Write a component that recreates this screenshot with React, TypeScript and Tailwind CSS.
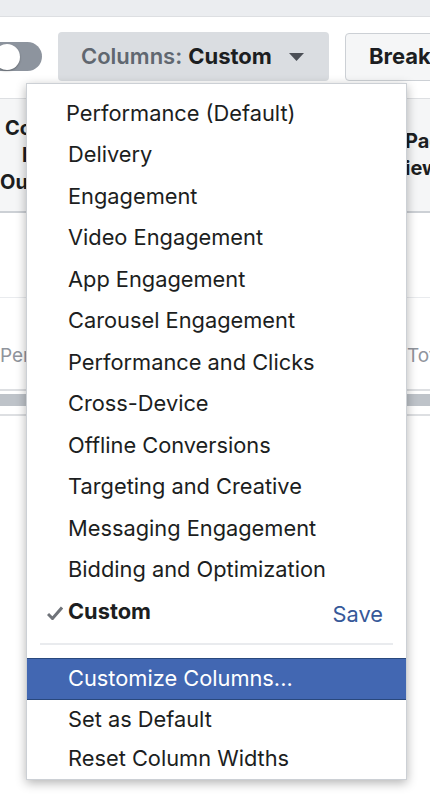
import React from "react";

const items = [
  "Performance (Default)",
  "Delivery",
  "Engagement",
  "Video Engagement",
  "App Engagement",
  "Carousel Engagement",
  "Performance and Clicks",
  "Cross-Device",
  "Offline Conversions",
  "Targeting and Creative",
  "Messaging Engagement",
  "Bidding and Optimization",
];

export default function App() {
  return (
    <div
      className="relative w-[430px] h-[810px] overflow-hidden bg-white text-[#1c1e21]"
      style={{ fontFamily: "Inter, 'Noto Sans', sans-serif" }}
    >
      {/* top band */}
      <div className="h-[17px] bg-[#ebedf0] border-b border-[#dddfe2]" />

      {/* toolbar */}
      <div className="flex items-center pt-[15px] h-[64px]">
        <div className="shrink-0 -ml-[14px] w-[56px] h-[29px] rounded-full bg-[#8d949e] flex items-center px-[2px]">
          <div className="w-[26px] h-[26px] rounded-full bg-white shadow-[0_1px_2px_rgba(0,0,0,0.3)] ml-[6px]" />
        </div>
        <div className="shrink-0 ml-[16px] w-[271px] h-[49px] rounded-[4px] bg-[#dadde1] flex items-center pl-[23px] text-[22px] font-semibold">
          <span className="text-[#606770]">Columns:</span>
          <span className="ml-[6px] text-[#1c1e21] font-bold">Custom</span>
          <svg className="ml-[17px]" width="15" height="8" viewBox="0 0 15 8">
            <path d="M0 0 H15 L7.5 8 Z" fill="#4b4f56" />
          </svg>
        </div>
        <div className="shrink-0 ml-[16px] w-[130px] h-[48px] rounded-[4px] bg-[#f5f6f7] border border-[#ccd0d5] flex items-center pl-[23px] text-[22px] font-bold whitespace-nowrap">
          Breakdown
        </div>
      </div>

      {/* table header */}
      <div className="mt-[17px] h-[115px] bg-[#f5f6f7] border-t border-[#dddfe2] border-b-2 border-b-[#ccd0d5] flex items-center justify-between text-[20px] font-bold leading-[27px]">
        <div className="w-[27px] overflow-hidden whitespace-nowrap">
          <div className="pl-[5px]">Cost</div>
          <div className="pl-[22px]">l</div>
          <div>Outcome</div>
        </div>
        <div className="w-[23px] overflow-hidden whitespace-nowrap">
          <div className="-ml-[2px]">Page</div>
          <div className="-ml-[2px]">iews</div>
        </div>
      </div>

      {/* row */}
      <div className="h-[85px] border-b border-[#e9ebee]" />
      <div className="h-[91px] flex items-end justify-between pb-[19px] text-[19px] text-[#90949c]">
        <div className="w-[27px] overflow-hidden whitespace-nowrap">Per</div>
        <div className="w-[23px] overflow-hidden whitespace-nowrap">Total</div>
      </div>
      <div className="border-t-2 border-[#dddfe2] pt-[3px] pb-[8px] border-b-2 border-b-[#dddfe2]">
        <div className="h-[12px] bg-[#bec3c9]" />
      </div>

      {/* dropdown menu */}
      <div className="absolute left-[26px] top-[83px] w-[381px] bg-white border border-[#ccd0d5] shadow-[0_3px_10px_rgba(0,0,0,0.3)] text-[21.8px] leading-none">
        <div className="pt-[9px]">
          {items.map((t, i) => (
            <div
              key={t}
              className={`h-[41.5px] flex items-center ${i === 0 ? "pl-[39px]" : "pl-[41px]"}`}
            >
              {t}
            </div>
          ))}
          <div className="h-[41.5px] flex items-center pl-[20px] pr-[23px]">
            <svg width="16" height="14" viewBox="0 0 16 14" className="mt-[2px]">
              <path d="M1 8 L5.5 12.5 L15 1.5" fill="none" stroke="#6f7379" strokeWidth="3" strokeLinejoin="miter" />
            </svg>
            <span className="ml-[5px] font-bold">Custom</span>
            <span className="ml-auto mt-[7px] text-[#365899]">Save</span>
          </div>
        </div>
        <div className="mt-[10px] mx-[13px] h-[2px] bg-[#e9ebee]" />
        <div className="mt-[13px] h-[42px] flex items-center pl-[41px] bg-[#4267b2] border-y border-[#29487d] text-white">
          Customize Columns...
        </div>
        <div className="h-[41px] flex items-center pl-[41px]">Set as Default</div>
        <div className="h-[38px] flex items-center pl-[41px] pb-[1px]">Reset Column Widths</div>
      </div>
    </div>
  );
}
